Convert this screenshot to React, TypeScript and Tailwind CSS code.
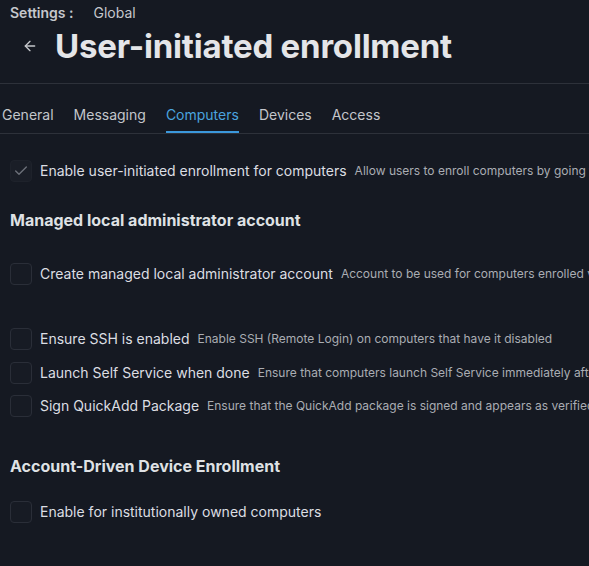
import { ArrowLeft, Check } from 'lucide-react';

const tabs = ['General', 'Messaging', 'Computers', 'Devices', 'Access'];

function Checkbox({ checked }: { checked?: boolean }) {
  return (
    <div
      className={`w-[22px] h-[22px] flex-shrink-0 rounded-[4px] flex items-center justify-center ${
        checked ? 'bg-[#1a1e27] border border-[#1e222b]' : 'bg-[#171b24] border border-[#2a2e38]'
      }`}
    >
      {checked && <Check className="w-[16px] h-[16px] text-[#6d717a]" strokeWidth={2} />}
    </div>
  );
}

function Row({ label, desc, checked, className = '' }: { label: string; desc?: string; checked?: boolean; className?: string }) {
  return (
    <div className={`flex items-center gap-2 whitespace-nowrap ${className}`}>
      <Checkbox checked={checked} />
      <span className="text-[14px] leading-5 text-[#dcdee2]">{label}</span>
      {desc && <span className="text-[12px] leading-5 text-[#aaadb3]">{desc}</span>}
    </div>
  );
}

export default function App() {
  return (
    <div className="w-full min-h-screen h-[566px] overflow-hidden bg-[#151922] font-['Inter','Liberation_Sans',sans-serif]">
      {/* Header */}
      <div className="border-b border-[#2d313a] pb-[18px]">
        <div className="px-[10px] pt-[3px] text-[14px] leading-5 text-[#c5c7cc] flex">
          <span className="font-semibold">Settings :</span>
          <span className="ml-[20px]">Global</span>
        </div>
        <div className="flex items-center mt-[4px]">
          <ArrowLeft className="w-[16px] h-[16px] text-[#c5c7cc] ml-[22px]" strokeWidth={2} />
          <h1 className="ml-[17px] text-[33px] leading-[38px] font-bold text-[#e4e5e8] tracking-[-0.2px]">User-initiated enrollment</h1>
        </div>
      </div>

      {/* Tabs */}
      <div className="flex gap-5 pl-[2px] border-b border-[#2d313a]">
        {tabs.map(t => (
          <div
            key={t}
            className={`pt-[21px] pb-[6px] text-[14px] leading-5 border-b-2 ${
              t === 'Computers' ? 'text-[#4aa3df] border-[#3b98dc]' : 'text-[#c3c6cb] border-transparent'
            }`}
          >
            {t}
          </div>
        ))}
      </div>

      {/* Content */}
      <div className="px-[10px]">
        <Row
          className="mt-[26px]"
          checked
          label="Enable user-initiated enrollment for computers"
          desc="Allow users to enroll computers by going to the enrollment URL"
        />

        <h2 className="mt-[26px] text-[16px] leading-6 font-bold text-[#dfe1e4]">Managed local administrator account</h2>

        <Row
          className="mt-[31px]"
          label="Create managed local administrator account"
          desc="Account to be used for computers enrolled via user-initiated enrollment"
        />
        <Row
          className="mt-[43px]"
          label="Ensure SSH is enabled"
          desc="Enable SSH (Remote Login) on computers that have it disabled"
        />
        <Row
          className="mt-[12px]"
          label="Launch Self Service when done"
          desc="Ensure that computers launch Self Service immediately after they are enrolled"
        />
        <Row
          className="mt-[11px]"
          label="Sign QuickAdd Package"
          desc="Ensure that the QuickAdd package is signed and appears as verified"
        />

        <h2 className="mt-[37px] text-[16px] leading-6 font-bold text-[#dfe1e4]">Account-Driven Device Enrollment</h2>

        <Row className="mt-[23px]" label="Enable for institutionally owned computers" />
      </div>
    </div>
  );
}
